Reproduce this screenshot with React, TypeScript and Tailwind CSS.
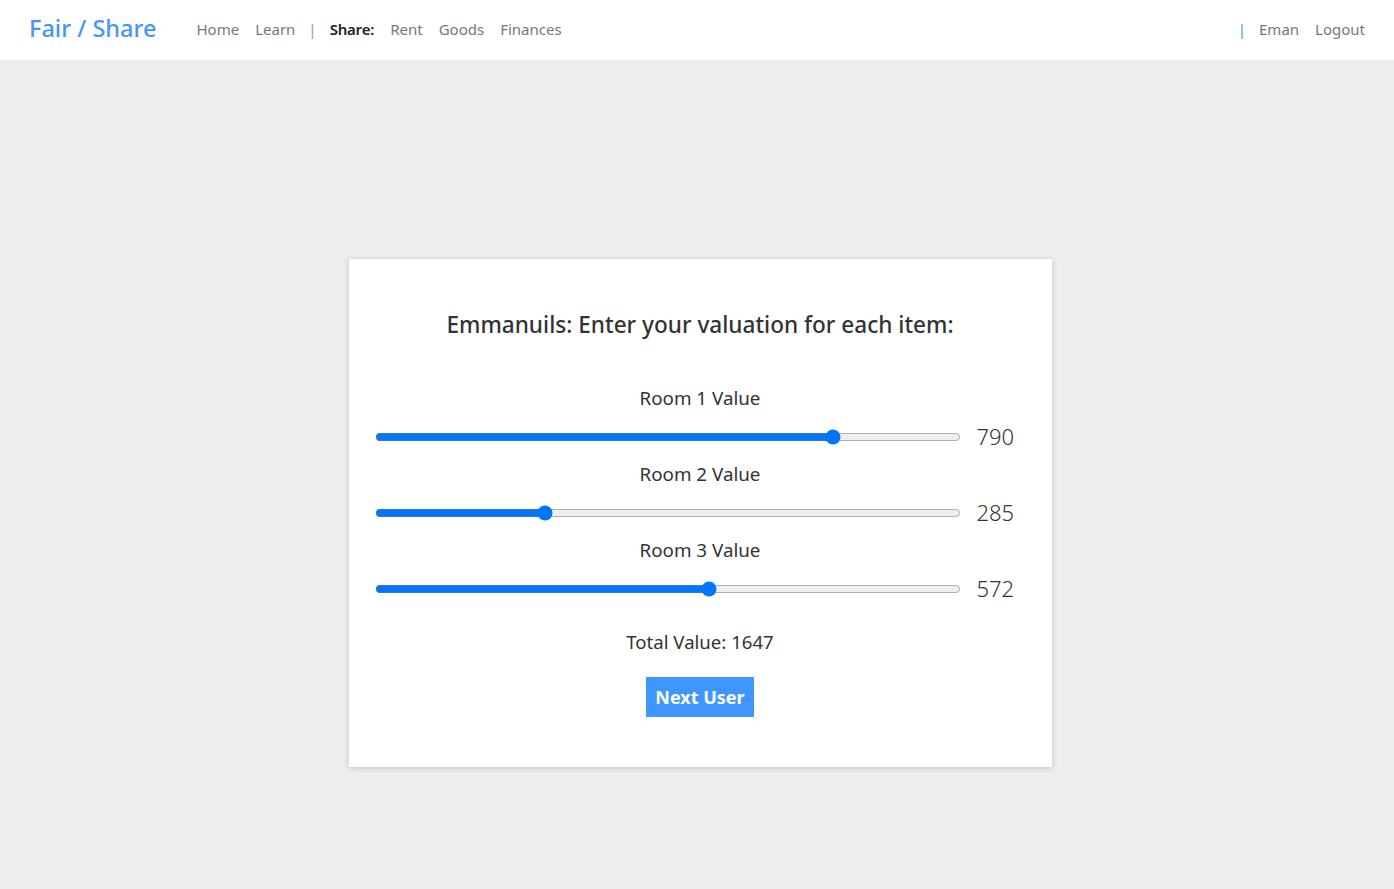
import { useState } from "react";

const rooms = [
  { id: 1, name: "Room 1 Value", value: 790 },
  { id: 2, name: "Room 2 Value", value: 285 },
  { id: 3, name: "Room 3 Value", value: 572 },
];

function Navbar() {
  return (
    <nav className="h-[60px] bg-white flex items-center px-[29px] pb-[2px] text-[15px]">
      <a className="text-[23.5px] font-medium text-[#4496ff] mr-[40px] leading-none">Fair / Share</a>
      <div className="flex items-center gap-4 text-[#777]">
        <a>Home</a>
        <a>Learn</a>
        <span className="text-[#999] -mx-[3px]">|</span>
        <span className="font-semibold text-[#222] tracking-[-0.2px]">Share:</span>
        <a>Rent</a>
        <a>Goods</a>
        <a>Finances</a>
      </div>
      <div className="ml-auto flex items-center gap-4 text-[#777]">
        <span className="text-[#4496ff] -mr-[3px]">|</span>
        <a>Eman</a>
        <a>Logout</a>
      </div>
    </nav>
  );
}

export default function App() {
  const [values, setValues] = useState(rooms.map((r) => r.value));
  const total = values.reduce((a, b) => a + b, 0);

  return (
    <div className="min-h-screen bg-[#ededed] text-[#333]" style={{ fontFamily: '"Noto Sans", "Open Sans", sans-serif' }}>
      <Navbar />
      <div className="flex justify-center pt-[199px] pl-[6px]">
        <div className="w-[703px] bg-white shadow-[0_1px_6px_rgba(0,0,0,0.18)] px-[26px] pt-[50px] pb-[50px] flex flex-col items-center">
          <h2 className="text-[22.6px] leading-[32px] font-medium text-[#333] mb-[44px]">
            Emmanuils: Enter your valuation for each item:
          </h2>

          <div className="w-full flex flex-col gap-2">
            {rooms.map((room, i) => (
              <div key={room.id} className="flex flex-col items-center">
                <label className="text-[18.8px] leading-[26px] mb-[10px]">{room.name}</label>
                <div className="w-full flex items-center h-[32px]">
                  <input
                    type="range"
                    min={0}
                    max={1000}
                    value={values[i]}
                    onChange={(e) => {
                      const next = [...values];
                      next[i] = Number(e.target.value);
                      setValues(next);
                    }}
                    className="flex-1 accent-[#0075ff]"
                  />
                  <span className="w-[49px] ml-4 text-[22px] font-light leading-[32px] -mt-[2px]">{values[i]}</span>
                </div>
              </div>
            ))}
          </div>

          <p className="text-[18.6px] leading-[26px] mt-[24px] mb-[22px]">Total Value: {total}</p>

          <button className="h-[40px] px-[9px] bg-[#4096ff] text-white text-[18px] font-bold">Next User</button>
        </div>
      </div>
    </div>
  );
}
